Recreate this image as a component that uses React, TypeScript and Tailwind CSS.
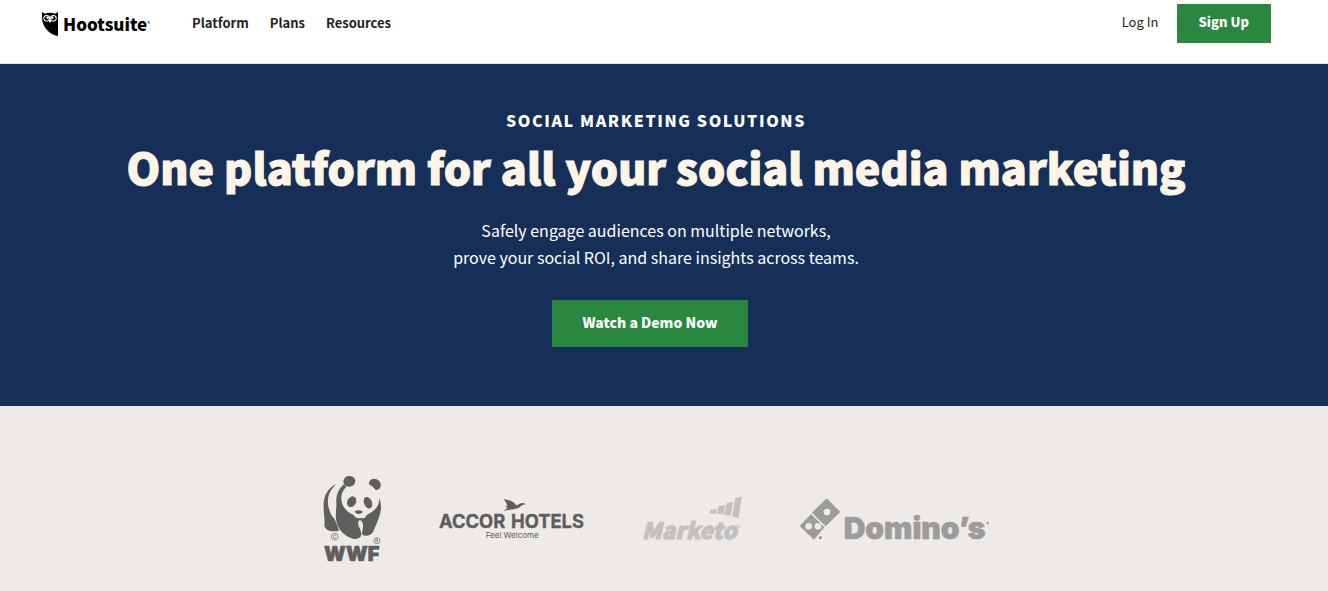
import React from "react";

const navLinks = ["Platform", "Plans", "Resources"];

function HootsuiteLogo() {
  return (
    <a href="#home" aria-label="Hootsuite" className="flex items-center gap-[5px] text-black">
      <svg viewBox="0 0 48 72" className="h-6 w-4" fill="currentColor" aria-hidden="true">
        <path d="M0 0L9 5Q24 0 39 5L48 0V72Q28 70 13 52Q0 36 0 16Z" />
        <path d="M18 24L30 24L24 33Z" fill="#fff" />
        <circle cx="14" cy="19" r="10" fill="#fff" />
        <circle cx="34" cy="19" r="10" fill="#fff" />
        <circle cx="14" cy="19" r="7" />
        <circle cx="34" cy="19" r="7" />
        <circle cx="17" cy="17" r="4" fill="#fff" />
        <circle cx="31" cy="17" r="4" fill="#fff" />
      </svg>
      <span className="flex items-center text-[17px] leading-[22px] font-black">
        Hootsuite<span className="text-[6px] font-normal">®</span>
      </span>
    </a>
  );
}

function WwfLogo() {
  return (
    <svg viewBox="36 30 180 261" className="h-[87px] w-[60px] overflow-visible" fill="#5f5f5e" role="img" aria-label="WWF">
      <path d="M76 57C52 68 36 92 38 124C38 148 42 164 40 179C40 196 64 203 84 197C80 184 75 173 71 163C56 146 49 125 51 103C53 84 63 69 76 57Z" />
      <path d="M99 58C82 72 75 91 76 113C77 134 72 151 76 169C82 197 104 216 126 221C140 224 151 218 151 208C151 193 139 182 142 170C145 163 153 165 155 175C159 190 151 199 154 209C164 217 183 210 188 197C195 179 209 153 210 129C210 116 208 106 205 99C206 123 190 139 168 149C164 158 157 161 151 159C140 161 132 158 129 151C105 140 92 124 91 102C90 86 96 75 106 66Z" />
      <ellipse cx="115" cy="49" rx="18" ry="16" transform="rotate(-12 115 49)" />
      <path d="M174 54C175 43 186 38 197 43C208 48 212 59 208 67C204 75 197 77 193 74C188 67 182 61 175 59Z" />
      <ellipse cx="122" cy="110" rx="13" ry="17" transform="rotate(28 122 110)" />
      <ellipse cx="171" cy="113" rx="12" ry="18" transform="rotate(-22 171 113)" />
      <path d="M131 139Q143 132 156 140L151 145Q143 149 135 145Z" />
      <path d="M129 150Q144 157 157 149L151 155Q141 158 134 155Z" fill="#eeeae7" />
      <g fill="none" stroke="#5f5f5e" strokeWidth="2">
        <circle cx="71" cy="215" r="10" />
        <path d="M75 211Q69 207 67 215Q69 223 75 219" />
        <circle cx="198" cy="227" r="9" />
        <path d="M195 232V222H199Q203 225 198 228L202 232" />
      </g>
      <text x="39" y="287" fontFamily="Inter, sans-serif" fontWeight="900" fontSize="60" stroke="#5f5f5e" strokeWidth="2">WWF</text>
    </svg>
  );
}

function AccorLogo() {
  return (
    <svg viewBox="24 38 444 126" className="h-[42px] w-[148px] overflow-visible" fill="#5c5d5d" role="img" aria-label="AccorHotels, Feel Welcome">
      <path d="M217 42C236 44 248 48 255 60C263 59 266 54 273 53C279 52 281 55 286 57C278 56 272 60 267 65C259 71 245 72 235 73L218 76L231 67L222 65L229 61C226 52 222 46 217 42Z" />
      <text x="24" y="127" fontFamily="Inter, sans-serif" fontWeight="700" fontSize="55" stroke="#5c5d5d" strokeWidth="1">ACCOR</text>
      <text x="240" y="127" fontFamily="Inter, sans-serif" fontWeight="700" fontSize="55" stroke="#5c5d5d" strokeWidth="1">HOTELS</text>
      <text x="164" y="159" fontFamily="Inter, sans-serif" fontSize="24">Feel Welcome</text>
    </svg>
  );
}

function MarketoLogo() {
  return (
    <svg viewBox="38 34 300 135" className="h-[45px] w-[100px] overflow-visible" fill="#c2c1c0" role="img" aria-label="Marketo">
      <path d="M242 75L260 74L256 87L237 85Z" />
      <path d="M265 64L285 62L279 89L260 87Z" />
      <path d="M290 54L309 51L300 94L281 90Z" />
      <path d="M315 39L335 36L324 101L305 95Z" />
      <text x="34" y="162" fontFamily="Noto Sans CJK SC, sans-serif" fontWeight="900" fontStyle="italic" fontSize="68" stroke="#c2c1c0" strokeWidth="3">Marketo</text>
      <circle cx="325" cy="125" r="4" fill="none" stroke="#c2c1c0" strokeWidth="2" />
    </svg>
  );
}

function DominosLogo() {
  return (
    <svg viewBox="30 34 570 132" className="h-11 w-[190px] overflow-visible" fill="#9c9c9b" role="img" aria-label="Domino's">
      <path d="M113 38L154 79L110 122L69 81Z" />
      <path d="M66 85L106 125L75 162L32 121Z" />
      <g fill="#eeeae7">
        <circle cx="114" cy="79" r="10" />
        <circle cx="59" cy="122" r="10" />
        <circle cx="87" cy="122" r="10" />
      </g>
      <circle cx="94" cy="156" r="5" />
      <text x="164" y="159" fontFamily="Inter, sans-serif" fontWeight="900" fontSize="90" stroke="#9c9c9b" strokeWidth="2">Domino’s</text>
      <circle cx="596" cy="112" r="4" />
    </svg>
  );
}

export default function App() {
  return (
    <div className="min-h-screen bg-[#eeeae7] font-['Noto_Sans_CJK_SC',sans-serif]">
      <header className="flex h-16 items-start justify-between border-b border-[#dddddd] bg-white pr-[57px] pl-[42px]">
        <div className="flex items-start gap-[42px] pt-3">
          <HootsuiteLogo />
          <nav className="flex gap-[21px] text-[13px] leading-[22px] font-bold text-[#241f21]">
            {navLinks.map((label) => (
              <a key={label} href={`#${label.toLowerCase()}`}>{label}</a>
            ))}
          </nav>
        </div>
        <div className="flex items-start gap-[18px] pt-1">
          <a href="#login" className="pt-[6px] text-[13px] leading-6 text-[#241f21]">Log In</a>
          <a href="#signup" className="bg-[#29873f] px-[22px] pt-[6px] pb-[9px] text-[13px] leading-6 font-black text-white">Sign Up</a>
        </div>
      </header>

      <main>
        <section className="flex flex-col items-center bg-[#152f58] pt-11 pr-4 pb-[59px] text-center text-white">
          <p className="text-[16px] leading-6 font-black tracking-widest">SOCIAL MARKETING SOLUTIONS</p>
          <h1 className="pt-[2px] text-[43px] leading-[64px] font-black text-[#fff5e6] [-webkit-text-stroke:1px_#fff5e6]">
            One platform for all your social media marketing
          </h1>
          <p className="pt-[19px] text-[16px] leading-[27px]">
            Safely engage audiences on multiple networks,
            <br />
            prove your social ROI, and share insights across teams.
          </p>
          <a href="#demo" className="mt-[29px] mr-3 bg-[#29873f] px-[30px] pt-[10px] pb-[13px] text-[14px] leading-6 font-black">
            Watch a Demo Now
          </a>
        </section>

        <section aria-label="Customers" className="flex items-center justify-center gap-14 pt-[69px] pr-4 pb-7">
          <WwfLogo />
          <AccorLogo />
          <MarketoLogo />
          <DominosLogo />
        </section>
      </main>
    </div>
  );
}
